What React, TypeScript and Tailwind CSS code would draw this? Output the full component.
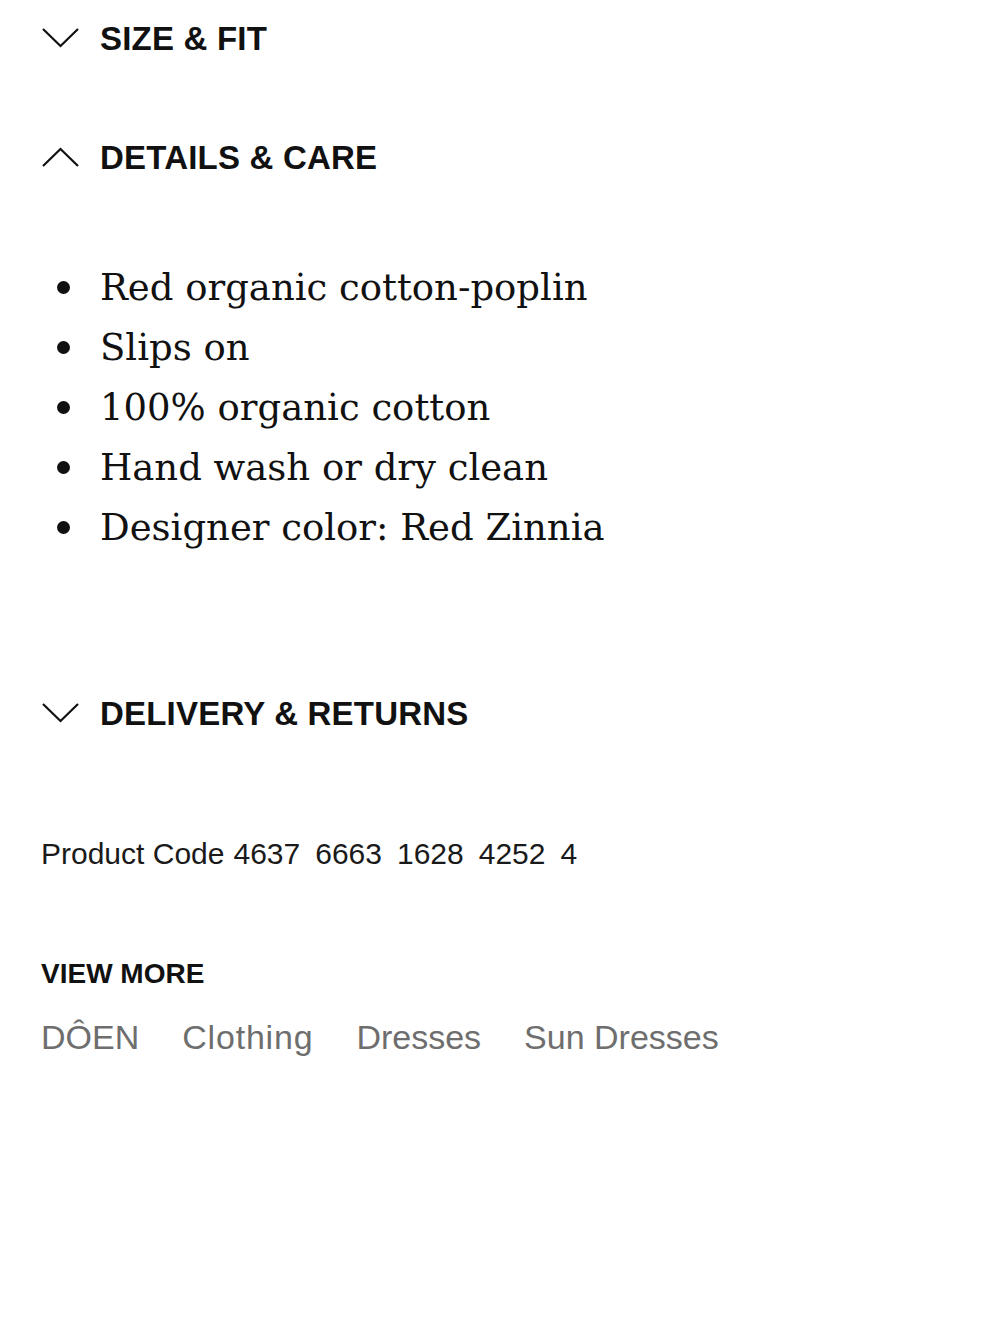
import React from "react";

function Chevron({ up }: { up?: boolean }) {
  return (
    <svg width="37" height="20" viewBox="0 0 37 20" className="shrink-0 ml-[1px]">
      <polyline
        points={up ? "1,19 18.5,2 36,19" : "1,1 18.5,18 36,1"}
        fill="none"
        stroke="#111"
        strokeWidth="2.2"
        strokeLinejoin="miter"
      />
    </svg>
  );
}

function Heading({ label, up }: { label: string; up?: boolean }) {
  return (
    <div className="flex items-center h-[40px] gap-[21px]">
      <Chevron up={up} />
      <span className="text-[33px] font-bold leading-none text-[#111] tracking-[0.2px]" style={{ fontFamily: '"Liberation Sans", Arial, sans-serif' }}>
        {label}
      </span>
    </div>
  );
}

const items = [
  "Red organic cotton-poplin",
  "Slips on",
  "100% organic cotton",
  "Hand wash or dry clean",
  "Designer color: Red Zinnia",
];

export default function App() {
  return (
    <div className="w-[1000px] h-[1333px] bg-white px-[41px] pt-[18px]">
      <Heading label="SIZE & FIT" />
      <div className="mt-[79px]">
        <Heading label="DETAILS & CARE" up />
      </div>
      <ul className="mt-[80px]">
        {items.map((t) => (
          <li key={t} className="flex items-center h-[60px]">
            <span className="w-[13px] h-[13px] rounded-full bg-[#111] ml-[16px] mr-[30px] shrink-0" />
            <span
              className="text-[37px] leading-none text-[#111]"
              style={{ fontFamily: '"DejaVu Serif", Georgia, serif' }}
            >
              {t}
            </span>
          </li>
        ))}
      </ul>
      <div className="mt-[136px]">
        <Heading label="DELIVERY & RETURNS" />
      </div>
      <div
        className="mt-[103px] h-[36px] flex items-center text-[30px] text-[#1a1a1a] leading-none"
        style={{ fontFamily: '"Liberation Sans", Arial, sans-serif' }}
      >
        <span>Product Code</span>
        <span className="ml-[9px]">4637</span>
        <span className="ml-[15px]">6663</span>
        <span className="ml-[15px]">1628</span>
        <span className="ml-[15px]">4252</span>
        <span className="ml-[15px]">4</span>
      </div>
      <div
        className="mt-[86px] h-[32px] flex items-center text-[28px] font-bold text-[#111] leading-none"
        style={{ fontFamily: '"Liberation Sans", Arial, sans-serif' }}
      >
        VIEW MORE
      </div>
      <div
        className="mt-[25px] h-[44px] flex items-center gap-[43px] text-[34px] text-[#6e6e6e] leading-none"
        style={{ fontFamily: '"Liberation Sans", Arial, sans-serif' }}
      >
        <span>DÔEN</span>
        <span className="tracking-[0.8px]">Clothing</span>
        <span>Dresses</span>
        <span>Sun Dresses</span>
      </div>
    </div>
  );
}
